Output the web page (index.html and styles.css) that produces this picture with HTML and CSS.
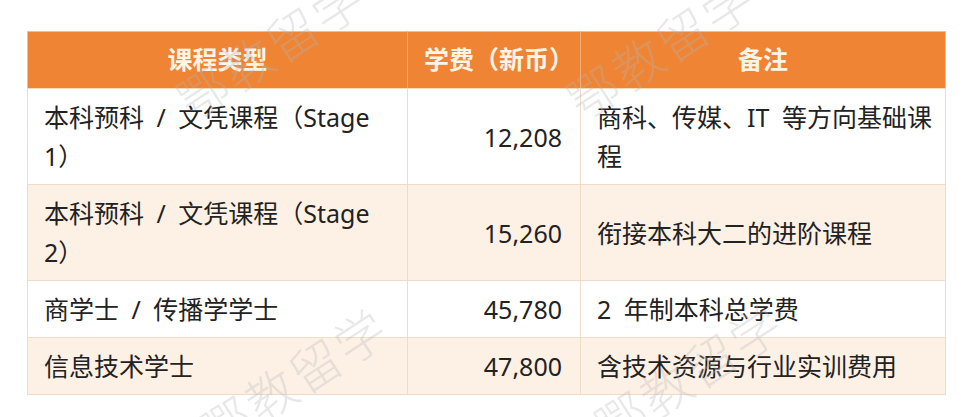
FILE: index.html
```html
<!DOCTYPE html>
<html lang="zh-CN">
<head>
<meta charset="utf-8">
<title>课程学费</title>
<link rel="stylesheet" href="styles.css">
</head>
<body>
<div class="page">
  <table class="fees">
    <colgroup>
      <col class="c-type">
      <col class="c-fee">
      <col class="c-note">
    </colgroup>
    <thead>
      <tr>
        <th>课程类型</th>
        <th>学费（新币）</th>
        <th>备注</th>
      </tr>
    </thead>
    <tbody>
      <tr>
        <td>本科预科 / 文凭课程（Stage 1）</td>
        <td class="num">12,208</td>
        <td class="note">商科、传媒、IT 等方向基础课程</td>
      </tr>
      <tr class="alt">
        <td>本科预科 / 文凭课程（Stage 2）</td>
        <td class="num">15,260</td>
        <td class="note">衔接本科大二的进阶课程</td>
      </tr>
      <tr>
        <td>商学士 / 传播学学士</td>
        <td class="num">45,780</td>
        <td class="note">2 年制本科总学费</td>
      </tr>
      <tr class="alt">
        <td>信息技术学士</td>
        <td class="num">47,800</td>
        <td class="note">含技术资源与行业实训费用</td>
      </tr>
    </tbody>
  </table>
  <div class="watermarks" aria-hidden="true">
    <span class="wm wm-1">鄂教留学</span>
    <span class="wm wm-2">鄂教留学</span>
    <span class="wm wm-3">鄂教留学</span>
    <span class="wm wm-4">鄂教留学</span>
  </div>
</div>
</body>
</html>
```

FILE: styles.css
```css
html, body {
  margin: 0;
  padding: 0;
  background: #ffffff;
}

.page {
  position: relative;
  width: 965px;
  height: 417px;
  overflow: hidden;
  padding: 31px 0 0 27px;
  box-sizing: border-box;
  font-family: "Noto Sans", "Noto Sans CJK SC", sans-serif;
}

.fees {
  width: 918px;
  table-layout: fixed;
  border-collapse: collapse;
  font-size: 25px;
  line-height: 39px;
  color: #222222;
  border: 1px solid #e2c29e;
}

.c-type { width: 380px; }
.c-fee { width: 173px; }
.c-note { width: 365px; }

.fees th {
  background: #ee8434;
  color: #fff4e6;
  font-weight: 700;
  text-align: center;
  padding: 8px 16px 9px;
  border-left: 1px solid #f4ad72;
  border-bottom: 1px solid #f6d9b8;
}

.fees th:first-child { border-left: none; }

.fees td {
  padding: 9px 16px 8px;
  vertical-align: middle;
  border: 1px solid #efdcc6;
  word-spacing: 6px;
}

.fees td.num {
  text-align: right;
  padding-right: 18px;
}

.fees td.note {
  padding-right: 8px;
}

.fees tr.alt td {
  background: #fdf1e6;
}

.watermarks {
  position: absolute;
  inset: 0;
  pointer-events: none;
}

.wm {
  position: absolute;
  transform: translate(-50%, -50%) rotate(-33deg);
  font-family: "Noto Sans CJK SC", sans-serif;
  font-size: 50px;
  font-weight: 200;
  letter-spacing: 3px;
  white-space: nowrap;
  color: rgba(185, 185, 185, 0.32);
}

.wm-1 { left: 270px; top: 46px; }
.wm-2 { left: 660px; top: 46px; }
.wm-3 { left: 293px; top: 377px; }
.wm-4 { left: 688px; top: 372px; }
```
